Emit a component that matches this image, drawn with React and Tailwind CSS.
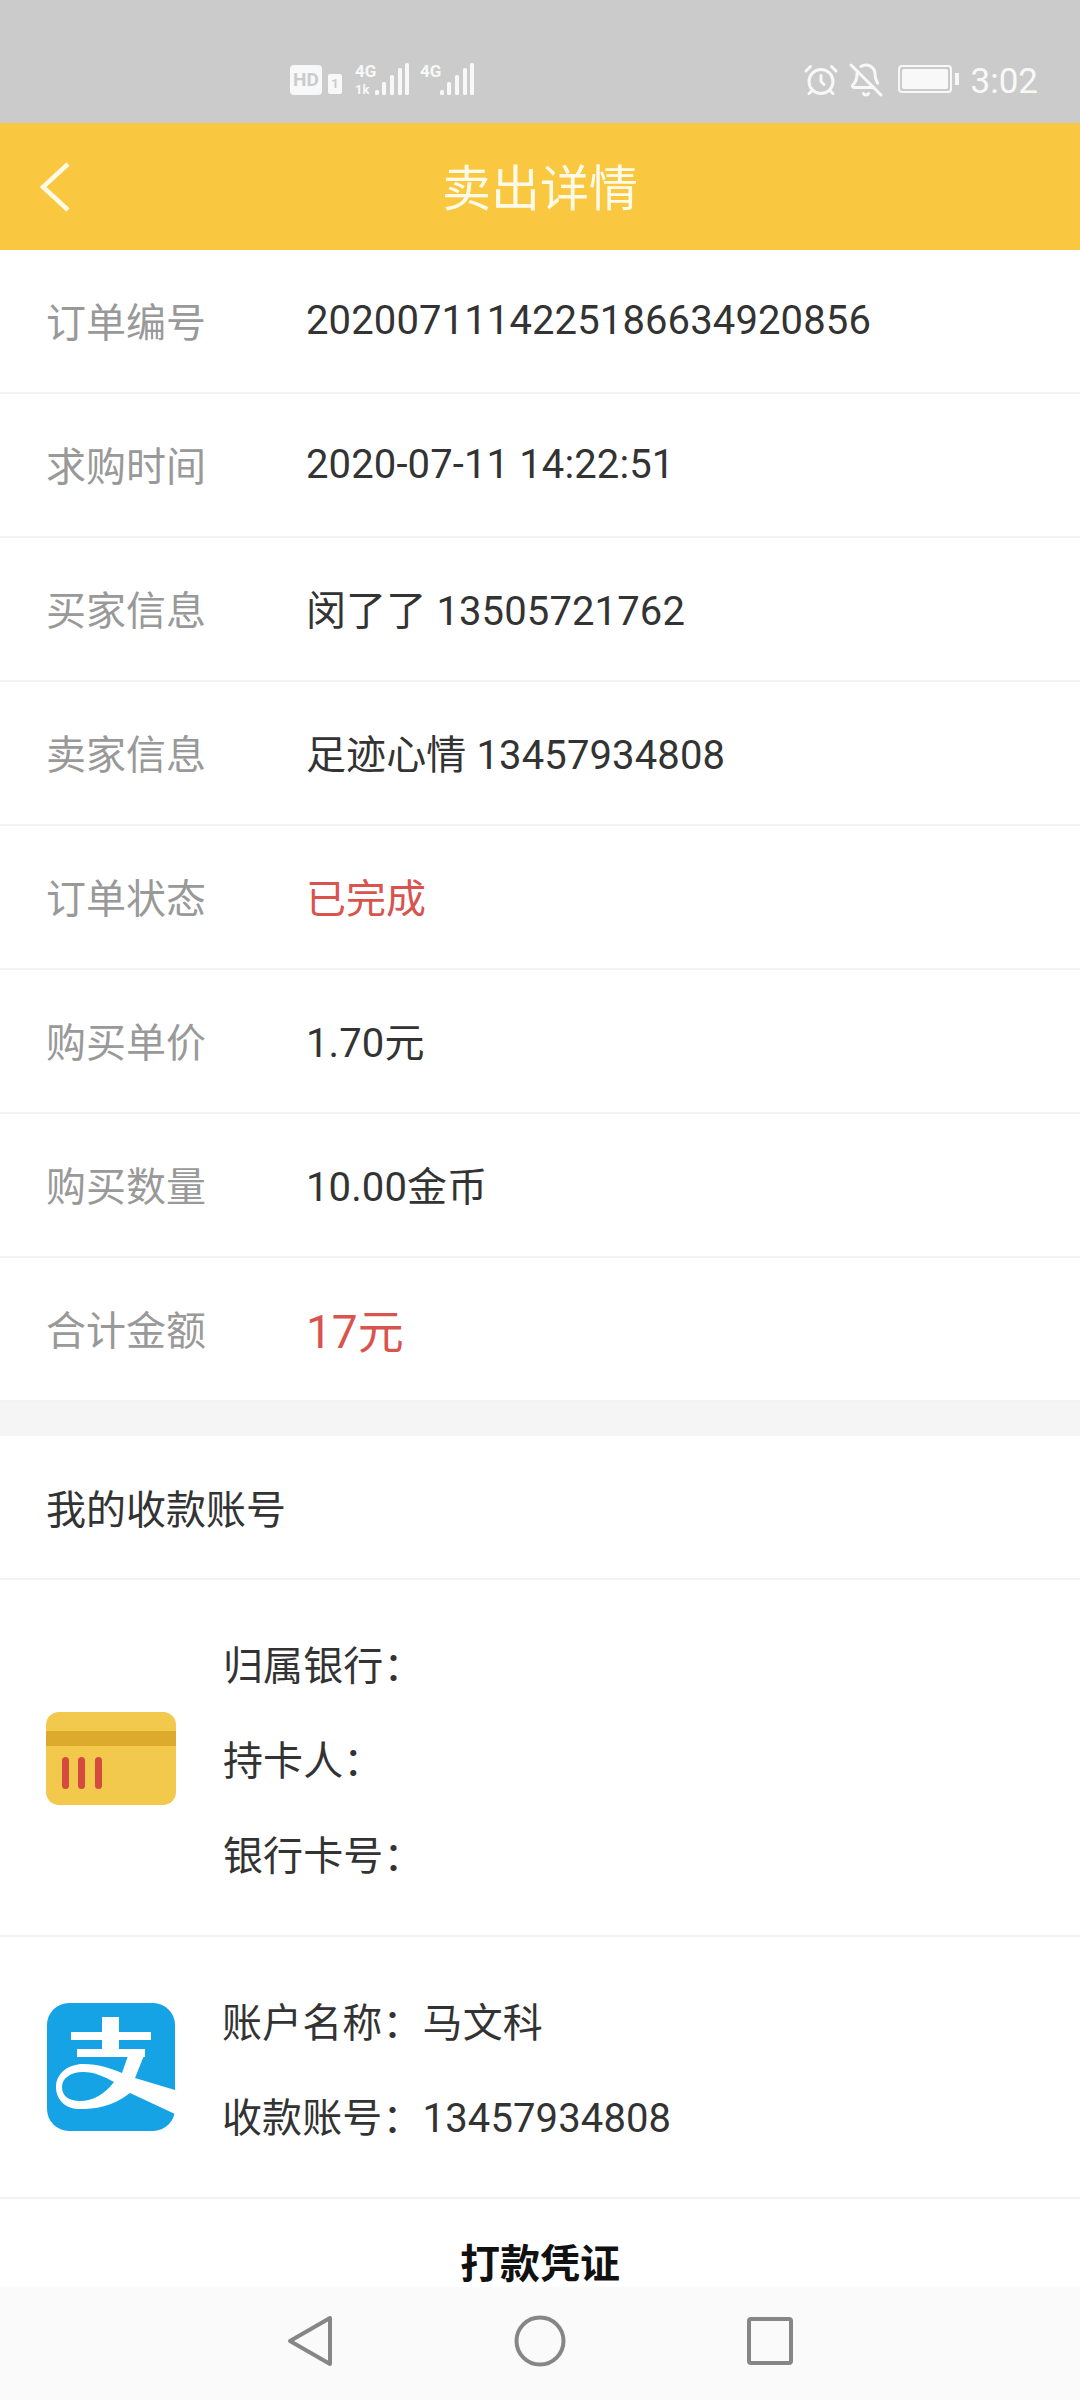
import React from "react";
import { AlarmClock, BellOff } from "lucide-react";

const rows = [
  ["订单编号", "2020071114225186634920856", "num"],
  ["求购时间", "2020-07-11 14:22:51", "num"],
  ["买家信息", "闵了了 13505721762"],
  ["卖家信息", "足迹心情 13457934808"],
  ["订单状态", "已完成", "red"],
  ["购买单价", "1.70元"],
  ["购买数量", "10.00金币"],
  ["合计金额", "17元", "big"],
];

function Signal({ dual }) {
  return (
    <div className="w-[55px] h-[32px] relative">
      <div className="flex flex-col">
        <span className="text-[17px] leading-[16px] font-bold text-[#f8f8f8]">4G</span>
        {dual && <span className="text-[13px] leading-[13px] font-bold text-[#f8f8f8] mt-[4px]">1k</span>}
      </div>
      <svg width="55" height="32" viewBox="0 0 55 32" className="absolute left-0 top-0">
        <g fill="#f8f8f8">
          <rect x="20" y="27" width="4" height="5" rx="1.5" />
          <rect x="27" y="19" width="4" height="13" rx="1.5" />
          <rect x="35" y="12" width="4" height="20" rx="1.5" />
          <rect x="43" y="5" width="4" height="27" rx="1.5" />
          <rect x="50" y="0" width="4" height="32" rx="1.5" />
        </g>
      </svg>
    </div>
  );
}

function StatusBar() {
  return (
    <div className="h-[123px] shrink-0 bg-[#cbcbcb] flex items-start pt-[64px] pl-[290px] pr-[42px] text-[#f8f8f8]">
      <div className="mt-[1px] w-[32px] h-[30px] rounded-[4px] bg-[#f8f8f8] text-[#cbcbcb] text-[19px] leading-[30px] font-bold text-center">HD</div>
      <div className="ml-[6px] mt-[10px] w-[14px] h-[20px] rounded-[2px] bg-[#f8f8f8] text-[#cbcbcb] text-[13px] leading-[20px] font-bold text-center">1</div>
      <div className="ml-[13px] mt-[-1px]"><Signal dual /></div>
      <div className="ml-[10px] mt-[-1px]"><Signal /></div>
      <AlarmClock className="ml-auto mt-[-2px]" size={36} strokeWidth={2} color="#f8f8f8" />
      <BellOff className="ml-[9px] mt-[-2px]" size={36} strokeWidth={2} color="#f8f8f8" />
      <div className="ml-[14px] mt-[1px] w-[54px] h-[28px] rounded-[4px] border-2 border-[#f8f8f8] p-[2px]">
        <div className="w-full h-full rounded-[2px] bg-[#f8f8f8]" />
      </div>
      <div className="ml-[3px] mt-[9px] w-[4px] h-[12px] bg-[#f8f8f8]" />
      <span className="ml-[12px] mt-[3px] text-[35px] leading-[30px] text-[#f8f8f8]">3:02</span>
    </div>
  );
}

function Header() {
  return (
    <div className="h-[127px] shrink-0 bg-[#fac740] grid grid-cols-[1fr_auto_1fr] items-center">
      <svg width="30" height="50" viewBox="0 0 30 50" className="ml-[40px]" fill="none" stroke="#fffbe8" strokeWidth="4.5">
        <path d="M28 2 L3 25 L28 48" />
      </svg>
      <span className="pt-[5px] text-[49px] leading-none text-[#fffbe8]">卖出详情</span>
      <span />
    </div>
  );
}

function Row({ label, value, kind }) {
  const cls =
    kind === "red"
      ? "pt-[5px] text-[40px] text-[#d9534f]"
      : kind === "big"
      ? "pt-[6px] text-[46px] text-[#d9534f]"
      : kind === "num"
      ? "text-[40px] tracking-[0.12px] text-[#333333]"
      : "pt-[5px] text-[40px] tracking-[0.12px] text-[#333333]";
  return (
    <div className="h-[144px] border-b-2 border-[#f3f3f3] flex items-center pl-[46px] last:border-b-0">
      <span className="w-[260px] pt-[5px] text-[40px] text-[#999999]">{label}</span>
      <span className={cls}>{value}</span>
    </div>
  );
}

function Lines({ items }) {
  return (
    <div className="flex flex-col">
      {items.map((t) => (
        <span key={t} className="text-[40px] leading-[95px] tracking-[0.12px] text-[#333333]">{t}</span>
      ))}
    </div>
  );
}

function CardIcon() {
  return (
    <svg width="130" height="93" viewBox="0 0 130 93" className="shrink-0 mt-[-6px]">
      <rect width="130" height="93" rx="13" fill="#f2c94c" />
      <rect y="19" width="130" height="15" fill="#dcab2e" />
      <rect x="16" y="45" width="7" height="32" rx="3.5" fill="#d64a3e" />
      <rect x="32" y="45" width="7" height="32" rx="3.5" fill="#d64a3e" />
      <rect x="49" y="45" width="7" height="32" rx="3.5" fill="#d64a3e" />
    </svg>
  );
}

function AlipayIcon() {
  return (
    <svg width="128" height="128" viewBox="0 0 128 128" className="shrink-0">
      <rect width="128" height="128" rx="22" fill="#16a3e6" />
      <g fill="#ffffff">
        <rect x="55" y="14" width="17" height="34" />
        <rect x="24" y="29" width="80" height="8" />
        <rect x="30" y="46" width="68" height="8" />
        <path
          fillRule="evenodd"
          d="M98 50 L88 75 L128 87 V111 L83 90 C65 104 48 106 32 106 C18 106 9 96 9 84 C9 70 22 61 36 61 C52 61 66 66 75 70 L82 50 Z M15 84 C15 75 24 69 36 69 C48 69 58 74 67 79 C58 91 46 98 33 98 C22 98 15 93 15 84 Z"
        />
      </g>
    </svg>
  );
}

function NavBar() {
  return (
    <div className="h-[113px] shrink-0 bg-[#fafafa] flex items-start pt-[28px] pl-[287px]">
      <svg width="46" height="52" viewBox="0 0 46 52" fill="none" stroke="#868686" strokeWidth="4" strokeLinejoin="round">
        <path d="M43 3 V49 L3 26 Z" />
      </svg>
      <svg width="52" height="52" viewBox="0 0 52 52" fill="none" stroke="#868686" strokeWidth="4" className="ml-[181px]">
        <circle cx="26" cy="26" r="23.5" />
      </svg>
      <svg width="46" height="48" viewBox="0 0 46 48" fill="none" stroke="#868686" strokeWidth="4" strokeLinejoin="round" className="ml-[181px] mt-[2px]">
        <rect x="2" y="2" width="42" height="44" rx="2" />
      </svg>
    </div>
  );
}

export default function App() {
  return (
    <div className="w-[1080px] h-[2400px] bg-white flex flex-col overflow-hidden font-['Roboto','Noto_Sans_CJK_SC',sans-serif]">
      <StatusBar />
      <Header />
      <div className="flex-1 min-h-0">
        {rows.map(([l, v, k]) => (
          <Row key={l} label={l} value={v} kind={k} />
        ))}
        <div className="h-[34px] bg-[#f5f5f5]" />
        <div className="h-[144px] border-b-2 border-[#f3f3f3] flex items-center pl-[46px] pt-[8px] text-[40px] text-[#333333]">我的收款账号</div>
        <div className="h-[357px] border-b-2 border-[#f3f3f3] flex items-center pl-[46px] pt-[7px] gap-[47px]">
          <CardIcon />
          <Lines items={["归属银行：", "持卡人：", "银行卡号："]} />
        </div>
        <div className="h-[262px] border-b-2 border-[#f3f3f3] flex items-center pl-[47px] gap-[47px]">
          <AlipayIcon />
          <div className="mt-[8px]">
            <Lines items={["账户名称：马文科", "收款账号：13457934808"]} />
          </div>
        </div>
        <div className="pt-[46px] text-center text-[40px] leading-[40px] font-bold text-[#111111]">打款凭证</div>
      </div>
      <NavBar />
    </div>
  );
}
